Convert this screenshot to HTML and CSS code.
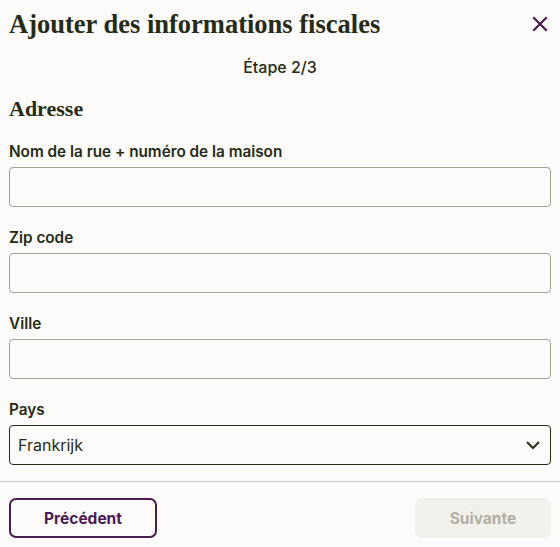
FILE: index.html
```html
<!DOCTYPE html>
<html lang="fr">
<head>
<meta charset="utf-8">
<link rel="stylesheet" href="styles.css">
</head>
<body>
<div class="modal">
  <div class="content">
    <div class="header">
      <h1 class="title">Ajouter des informations fiscales</h1>
      <button class="close" aria-label="Fermer">
        <svg width="16" height="16" viewBox="0 0 16 16"><path d="M2 2 L14 14 M14 2 L2 14" stroke="#4b1a52" stroke-width="2.2" stroke-linecap="square" fill="none"/></svg>
      </button>
    </div>
    <div class="step">Étape 2/3</div>
    <h2 class="section">Adresse</h2>
    <div class="field">
      <label class="label">Nom de la rue + numéro de la maison</label>
      <div class="input"></div>
    </div>
    <div class="field">
      <label class="label">Zip code</label>
      <div class="input"></div>
    </div>
    <div class="field">
      <label class="label">Ville</label>
      <div class="input"></div>
    </div>
    <div class="field">
      <label class="label">Pays</label>
      <div class="input select">
        <span class="value">Frankrijk</span>
        <svg width="16" height="10" viewBox="0 0 16 10"><path d="M2 2 L8 8 L14 2" stroke="#262b16" stroke-width="2" fill="none"/></svg>
      </div>
    </div>
  </div>
  <div class="footer">
    <button class="btn btn-outline">Précédent</button>
    <button class="btn btn-disabled">Suivante</button>
  </div>
</div>
</body>
</html>
```
FILE: styles.css
```css
html, body {
  margin: 0;
  padding: 0;
  background: #fcfbf9;
}
body {
  font-family: "Inter", "Liberation Sans", sans-serif;
  color: #262b16;
}
.modal {
  width: 560px;
  height: 547px;
  display: flex;
  flex-direction: column;
}
.content {
  padding: 0 9px;
}
.header {
  display: flex;
  justify-content: space-between;
  align-items: center;
  padding-top: 8px;
  height: 32px;
}
.title {
  margin: 0;
  font-family: "Liberation Serif", serif;
  font-weight: 700;
  font-size: 26.5px;
  line-height: 32px;
  color: #262b16;
}
.close {
  border: 0;
  background: none;
  padding: 0;
  margin-right: 3px;
  width: 16px;
  height: 16px;
  display: flex;
}
.step {
  text-align: center;
  font-size: 16px;
  font-weight: 500;
  line-height: 20px;
  margin-top: 17px;
}
.section {
  margin: 18px 0 0;
  font-family: "Liberation Serif", serif;
  font-weight: 700;
  font-size: 22px;
  line-height: 28px;
}
.field {
  margin-top: 19px;
}
.field + .field {
  margin-top: 21px;
}
.label {
  display: block;
  font-size: 15.3px;
  font-weight: 600;
  line-height: 20px;
  margin-bottom: 5px;
}
.input {
  height: 38px;
  border: 1px solid #a3a193;
  border-radius: 4px;
  background: #fcfbf9;
}
.select {
  border-color: #262b16;
  display: flex;
  align-items: center;
  justify-content: space-between;
  padding: 0 9px 0 8px;
}
.value {
  font-size: 16px;
  color: #262b16;
}
.footer {
  margin-top: 16px;
  border-top: 1px solid #c9c8c3;
  padding: 16px 9px 0;
  display: flex;
  justify-content: space-between;
}
.btn {
  height: 40px;
  border-radius: 7px;
  font-family: "Inter", "Liberation Sans", sans-serif;
  font-size: 15.5px;
  font-weight: 700;
}
.btn-outline {
  width: 148px;
  border: 2px solid #4b1a52;
  background: transparent;
  color: #4b1a52;
}
.btn-disabled {
  width: 136px;
  border: 0;
  background: #f1f0eb;
  color: #b3afa5;
}
```
